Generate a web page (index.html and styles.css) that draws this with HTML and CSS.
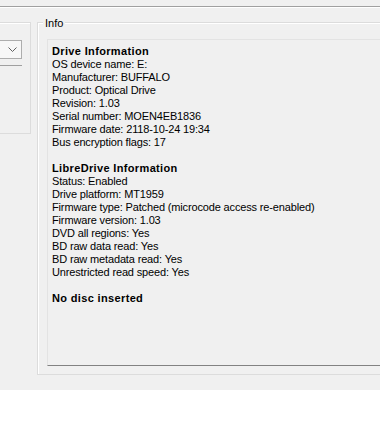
FILE: index.html
```html
<!DOCTYPE html>
<html lang="en">
<head>
    <meta charset="UTF-8">
    <meta name="viewport" content="width=device-width, initial-scale=1.0">
    <title>Drive Info</title>
    <link rel="stylesheet" href="styles.css">
</head>
<body>
    <div class="window">
        <div class="topline"></div>
        <div class="main">
            <div class="side">
                <div class="combo">
                    <svg class="chevron" width="9" height="5" viewBox="0 0 9 5">
                        <polyline points="0.5,0.5 4.5,4.5 8.5,0.5" fill="none" stroke="#606060" stroke-width="1"/>
                    </svg>
                </div>
                <div class="combo-rule"></div>
            </div>
            <div class="group">
                <span class="group-title">Info</span>
                <div class="info">
                    <div class="head">Drive Information</div>
                    <div>OS device name: E:</div>
                    <div>Manufacturer: BUFFALO</div>
                    <div>Product: Optical Drive</div>
                    <div>Revision: 1.03</div>
                    <div>Serial number: MOEN4EB1836</div>
                    <div>Firmware date: 2118-10-24 19:34</div>
                    <div>Bus encryption flags: 17</div>
                    <div class="gap"></div>
                    <div class="head">LibreDrive Information</div>
                    <div>Status: Enabled</div>
                    <div>Drive platform: MT1959</div>
                    <div>Firmware type: Patched (microcode access re-enabled)</div>
                    <div>Firmware version: 1.03</div>
                    <div>DVD all regions: Yes</div>
                    <div>BD raw data read: Yes</div>
                    <div>BD raw metadata read: Yes</div>
                    <div>Unrestricted read speed: Yes</div>
                    <div class="gap"></div>
                    <div class="head">No disc inserted</div>
                </div>
            </div>
        </div>
    </div>
</body>
</html>
```

FILE: styles.css
```css
body {
    margin: 0;
    background: #ffffff;
    font-family: "Liberation Sans", Arial, sans-serif;
    font-size: 11px;
    color: #000;
    overflow: hidden;
}
.window {
    height: 390px;
    background: #f0f0f0;
    overflow: hidden;
}
.topline {
    height: 6px;
    border-bottom: 1px solid #a0a0a0;
    box-shadow: 0 1px 0 #ffffff;
}
.main {
    display: flex;
    align-items: flex-start;
}
.side {
    flex: none;
    width: 41px;
    height: 112px;
    margin-top: 15px;
    margin-left: -10px;
    box-sizing: border-box;
    border: 1px solid #dcdcdc;
    box-shadow: inset 1px 1px 0 #ffffff;
    padding-top: 17px;
}
.combo {
    width: 31px;
    height: 19px;
    box-sizing: border-box;
    border: 1px solid #adadad;
    background: #f7f7f7;
    display: flex;
    align-items: center;
    justify-content: flex-end;
    padding-right: 4px;
}
.chevron {
    display: block;
}
.combo-rule {
    width: 31px;
    height: 1px;
    margin-top: 6px;
    background: #a0a0a0;
}
.group {
    position: relative;
    flex: none;
    width: 380px;
    height: 353px;
    margin-top: 15px;
    margin-left: 6px;
    box-sizing: border-box;
    border: 1px solid #dcdcdc;
    box-shadow: inset 1px 1px 0 #ffffff;
    padding: 16px 0 0 9px;
}
.group-title {
    position: absolute;
    top: -7px;
    left: 5px;
    padding: 0 2px;
    background: #f0f0f0;
    line-height: 14px;
}
.info {
    height: 327px;
    box-sizing: border-box;
    border-top: 1px solid #e3e3e3;
    border-left: 1px solid #e3e3e3;
    border-bottom: 1px solid #828282;
    padding: 5px 0 0 4px;
    line-height: 13px;
    letter-spacing: -0.15px;
    white-space: nowrap;
}
.head {
    font-weight: bold;
    letter-spacing: 0.35px;
}
.gap {
    height: 13px;
}
```
